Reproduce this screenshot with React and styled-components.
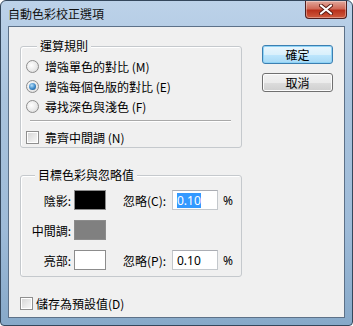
import React from "react";
import styled, { createGlobalStyle } from "styled-components";

const Global = createGlobalStyle`
  body {
    margin: 0;
    background: #ffffff;
  }
  * {
    box-sizing: border-box;
  }
`;

const font = `"Noto Sans CJK TC", "Noto Sans", sans-serif`;

const Window = styled.div`
  width: 353px;
  height: 326px;
  display: flex;
  flex-direction: column;
  padding: 0 7px 7px 7px;
  border: 1px solid #34475c;
  border-radius: 6px 6px 4px 4px;
  background: linear-gradient(180deg, #bcd2e9 0%, #a9c3dd 30%, #9ebbd8 70%, #87a9c9 100%);
  font-family: ${font};
  font-size: 12px;
  color: #000;
`;

const TitleBar = styled.div`
  height: 25px;
  display: flex;
  align-items: flex-start;
`;

const Title = styled.div`
  padding-top: 4px;
  line-height: 17px;
  color: #111;
`;

const CloseButton = styled.div`
  margin-left: auto;
  margin-right: -2px;
  width: 42px;
  height: 18px;
  display: flex;
  align-items: center;
  justify-content: center;
  border: 1px solid #4f1f1f;
  border-top: none;
  border-radius: 0 0 4px 4px;
  background: linear-gradient(180deg, #e2a89c 0%, #d06a58 45%, #b9311c 55%, #cf5b3e 100%);
  box-shadow: inset 0 0 0 1px rgba(255, 255, 255, 0.35);
`;

const Client = styled.div`
  flex: 1;
  display: grid;
  grid-template-columns: 222px 71px;
  column-gap: 20px;
  align-items: start;
  padding: 19px 0 0 11px;
  background: #f0f0f0;
  border: 1px solid #5d7188;
`;

const LeftColumn = styled.div`
  display: flex;
  flex-direction: column;
`;

const Group = styled.section`
  display: flex;
  flex-direction: column;
  margin-top: ${(p) => p.$top || 0}px;
  padding: ${(p) => p.$pad};
  border: 1px solid #c5c9cd;
  border-radius: 3px;
  box-shadow: inset 1px 1px 0 #ffffff;
`;

const Legend = styled.div`
  align-self: flex-start;
  margin: -9px 0 0 11px;
  padding: 0 3px;
  line-height: 16px;
  background: #f0f0f0;
`;

const OptionRow = styled.label`
  height: 20px;
  display: flex;
  align-items: center;
  gap: 6px;
  white-space: nowrap;
  margin-top: ${(p) => p.$mt || 0}px;
`;

const Radio = styled.span`
  position: relative;
  width: 13px;
  height: 13px;
  flex: none;
  border-radius: 50%;
  border: 1px solid #8d8d8d;
  background: radial-gradient(circle at 40% 40%, #ffffff 0%, #e8e8e8 60%, #d0d0d0 100%);

  &::after {
    content: "";
    display: ${(p) => (p.$checked ? "block" : "none")};
    position: absolute;
    left: 2px;
    top: 2px;
    width: 7px;
    height: 7px;
    border-radius: 50%;
    background: radial-gradient(circle at 40% 35%, #b7e0fb 0%, #3a87c7 55%, #1c4a78 100%);
  }
`;

const Check = styled.span`
  width: 13px;
  height: 13px;
  flex: none;
  border: 1px solid #8f8f8f;
  background: linear-gradient(135deg, #d4d4d4 0%, #ebebeb 60%, #f8f8f8 100%);
  box-shadow: inset 0 0 0 1px #ffffff;
`;

const Separator = styled.div`
  margin: 4px 10px 0 4px;
  height: 2px;
  border-top: 1px solid #a9a9a9;
  border-bottom: 1px solid #ffffff;
`;

const ColorRow = styled.div`
  height: 20px;
  display: flex;
  align-items: center;
  margin-top: ${(p) => p.$mt || 0}px;
`;

const RowLabel = styled.span`
  width: 47px;
  margin-right: 3px;
  text-align: right;
  white-space: nowrap;
`;

const Swatch = styled.span`
  width: 32px;
  height: 20px;
  border: 1px solid #8c8c8c;
  background: ${(p) => p.$color};
`;

const IgnoreLabel = styled.span`
  margin-left: 17px;
  width: 49px;
  white-space: nowrap;
`;

const ValueBox = styled.div`
  width: 46px;
  height: 20px;
  display: flex;
  align-items: center;
  padding-left: 4px;
  background: #ffffff;
  border: 1px solid #c4c8cc;
  border-top-color: #abadb3;
`;

const Selected = styled.span`
  background: ${(p) => (p.$active ? "#3399ff" : "transparent")};
  color: ${(p) => (p.$active ? "#ffffff" : "#000000")};
  line-height: 15px;
  font-family: "Noto Sans", sans-serif;
`;

const Percent = styled.span`
  margin-left: 5px;
  font-family: "Noto Sans", sans-serif;
`;

const BottomCheck = styled(OptionRow)`
  margin-top: 16px;
  gap: 3px;
`;

const ButtonColumn = styled.div`
  display: flex;
  flex-direction: column;
  gap: 9px;
  margin-top: -1px;
`;

const Button = styled.div`
  height: 19px;
  display: flex;
  align-items: center;
  justify-content: center;
  border-radius: 3px;
  border: 1px solid ${(p) => (p.$primary ? "#3c7fb1" : "#707070")};
  background: ${(p) =>
    p.$primary
      ? "linear-gradient(180deg, #eaf6fd 0%, #d9f0fc 50%, #bee6fd 51%, #a7d9f5 100%)"
      : "linear-gradient(180deg, #f2f2f2 0%, #ebebeb 50%, #dddddd 51%, #cfcfcf 100%)"};
  box-shadow: inset 0 0 0 1px ${(p) => (p.$primary ? "#8fd3f6" : "#fcfcfc")};
`;

const CloseIcon = () => (
  <svg width="14" height="11" viewBox="0 0 14 11">
    <path
      d="M2 1.5 L12 9.5 M12 1.5 L2 9.5"
      stroke="#5a1a12"
      strokeWidth="4"
      strokeLinecap="round"
    />
    <path
      d="M2 1.5 L12 9.5 M12 1.5 L2 9.5"
      stroke="#ffffff"
      strokeWidth="2.2"
      strokeLinecap="round"
    />
  </svg>
);

const rules = [
  { label: "增強單色的對比 (M)", checked: false },
  { label: "增強每個色版的對比 (E)", checked: true },
  { label: "尋找深色與淺色 (F)", checked: false },
];

const targets = [
  { label: "陰影:", color: "#000000", ignore: "忽略(C):", active: true },
  { label: "中間調:", color: "#808080" },
  { label: "亮部:", color: "#ffffff", ignore: "忽略(P):", active: false },
];

export default function App() {
  return (
    <>
      <Global />
      <Window>
        <TitleBar>
          <Title>自動色彩校正選項</Title>
          <CloseButton>
            <CloseIcon />
          </CloseButton>
        </TitleBar>
        <Client>
          <LeftColumn>
            <Group $pad="0 0 0 5px">
              <Legend>運算規則</Legend>
              <OptionRow $mt={2}>
                <Radio $checked={rules[0].checked} />
                {rules[0].label}
              </OptionRow>
              {rules.slice(1).map((r) => (
                <OptionRow key={r.label}>
                  <Radio $checked={r.checked} />
                  {r.label}
                </OptionRow>
              ))}
              <Separator />
              <OptionRow $mt={5}>
                <Check />
                靠齊中間調 (N)
              </OptionRow>
            </Group>
            <Group $top={27} $pad="0 0 6px 3px">
              <Legend>目標色彩與忽略值</Legend>
              {targets.map((t, i) => (
                <ColorRow key={t.label} $mt={i ? 10 : 7}>
                  <RowLabel>{t.label}</RowLabel>
                  <Swatch $color={t.color} />
                  {t.ignore && (
                    <>
                      <IgnoreLabel>{t.ignore}</IgnoreLabel>
                      <ValueBox>
                        <Selected $active={t.active}>0.10</Selected>
                      </ValueBox>
                      <Percent>%</Percent>
                    </>
                  )}
                </ColorRow>
              ))}
            </Group>
            <BottomCheck>
              <Check />
              儲存為預設值(D)
            </BottomCheck>
          </LeftColumn>
          <ButtonColumn>
            <Button $primary>確定</Button>
            <Button>取消</Button>
          </ButtonColumn>
        </Client>
      </Window>
    </>
  );
}
